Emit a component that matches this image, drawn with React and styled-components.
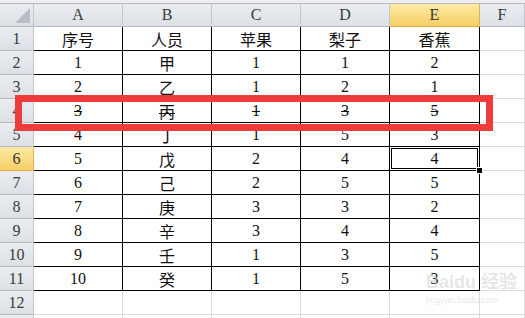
import React from "react";
import styled, { createGlobalStyle, css } from "styled-components";

// page reset, the sheet fills the whole window
const Global = createGlobalStyle`
  html, body { margin: 0; padding: 0; background: #fff; overflow: hidden; }
  body { font-family: "Liberation Serif", "Noto Sans CJK SC", serif; }
`;

const COLS = ["A", "B", "C", "D", "E", "F"];
const DATA = [
  ["序号", "人员", "苹果", "梨子", "香蕉"],
  ["1", "甲", "1", "1", "2"],
  ["2", "乙", "1", "2", "1"],
  ["3", "丙", "1", "3", "5"],
  ["4", "丁", "1", "5", "3"],
  ["5", "戊", "2", "4", "4"],
  ["6", "己", "2", "5", "5"],
  ["7", "庚", "3", "3", "2"],
  ["8", "辛", "3", "4", "4"],
  ["9", "壬", "1", "3", "5"],
  ["10", "癸", "1", "5", "3"],
  ["", "", "", "", ""],
  ["", "", "", "", ""],
];
const STRUCK_ROW = 4; // row 丙 is crossed out
const SEL = { row: 6, col: 4 }; // E6 is the active cell
const HOT_COL = 4;

const Frame = styled.div`
  position: relative;
  width: 525px;
  height: 318px;
  overflow: hidden;
  padding-top: 3px;
  box-sizing: border-box;
  background: #eceef0;
`;

const Grid = styled.div`
  display: grid;
  grid-template-columns: 34px 89px 89px 89px 89px 90px 1fr;
  grid-auto-rows: 24px;
  background: #fff;
`;

const Head = styled.div`
  box-sizing: border-box;
  display: flex;
  align-items: center;
  justify-content: center;
  font-size: 16px;
  color: #3a3a3a;
  border-right: 1px solid #c2c6cc;
  border-bottom: 1px solid #b4b9c0;
  background: linear-gradient(#e9ecf0, #dde1e6);
  ${(p) => p.$top && css`border-top: 1px solid #b4b9c0;`}
  ${(p) =>
    p.$hot &&
    css`
      background: linear-gradient(#fdeaa6, #f7cf66);
      border-right-color: #e7b24a;
      border-bottom-color: #e3ab3e;
      color: #333;
    `}
`;

const Corner = styled(Head)`
  justify-content: flex-end;
  align-items: flex-end;
  padding: 0 3px 3px 0;
  svg { display: block; }
`;

const Cell = styled.div`
  position: relative;
  box-sizing: border-box;
  display: flex;
  align-items: center;
  justify-content: center;
  font-size: 16px;
  color: #111;
  border-right: 1px solid #dadcdf;
  border-bottom: 1px solid #dadcdf;
  ${(p) => p.$box && css`border-right-color: #000; border-bottom-color: #000;`}
  ${(p) => p.$strike && css`text-decoration: line-through; text-decoration-thickness: 1px;`}
  ${(p) =>
    p.$selected &&
    css`
      box-shadow: inset 0 0 0 1px #fff, inset 0 0 0 2px #000;
    `}
`;

const FillHandle = styled.span`
  position: absolute;
  right: -4px;
  bottom: -4px;
  width: 5px;
  height: 5px;
  background: #000;
  border: 1px solid #fff;
  z-index: 2;
`;

// the red annotation box drawn over row 4
const Mark = styled.div`
  position: absolute;
  left: 15px;
  top: 95px;
  width: 478px;
  height: 36px;
  box-sizing: border-box;
  border: 7px solid #f03b3b;
  pointer-events: none;
`;

const Watermark = styled.div`
  position: absolute;
  left: 426px;
  top: 272px;
  display: flex;
  flex-direction: column;
  align-items: flex-start;
  color: rgba(200, 200, 200, 0.45);
  font-family: "Liberation Sans", "Noto Sans CJK SC", sans-serif;
  pointer-events: none;
  .brand { font-size: 18px; font-weight: bold; line-height: 20px; }
  .url { font-size: 9px; line-height: 10px; margin-top: 3px; }
`;

export default function App() {
  return (
    <>
      <Global />
      <Frame>
        <Grid>
          <Corner $top>
            <svg width="15" height="15" viewBox="0 0 15 15">
              <polygon points="15,0 15,15 0,15" fill="#b9bdc3" />
            </svg>
          </Corner>
          {COLS.map((c, i) => (
            <Head key={c} $top $hot={i === HOT_COL}>{c}</Head>
          ))}

          {DATA.map((row, r) => {
            const n = r + 1;
            const inTable = n <= 11;
            return (
              <React.Fragment key={n}>
                <Head $hot={n === SEL.row}>{n}</Head>
                {row.map((v, c) => {
                  const sel = n === SEL.row && c === SEL.col;
                  return (
                    <Cell key={c} $box={inTable} $strike={n === STRUCK_ROW} $selected={sel}>
                      {v}
                      {sel && <FillHandle />}
                    </Cell>
                  );
                })}
                <Cell />
              </React.Fragment>
            );
          })}
        </Grid>
        <Mark />
        <Watermark>
          <span className="brand">Baidu 经验</span>
          <span className="url">jingyan.baidu.com</span>
        </Watermark>
      </Frame>
    </>
  );
}
